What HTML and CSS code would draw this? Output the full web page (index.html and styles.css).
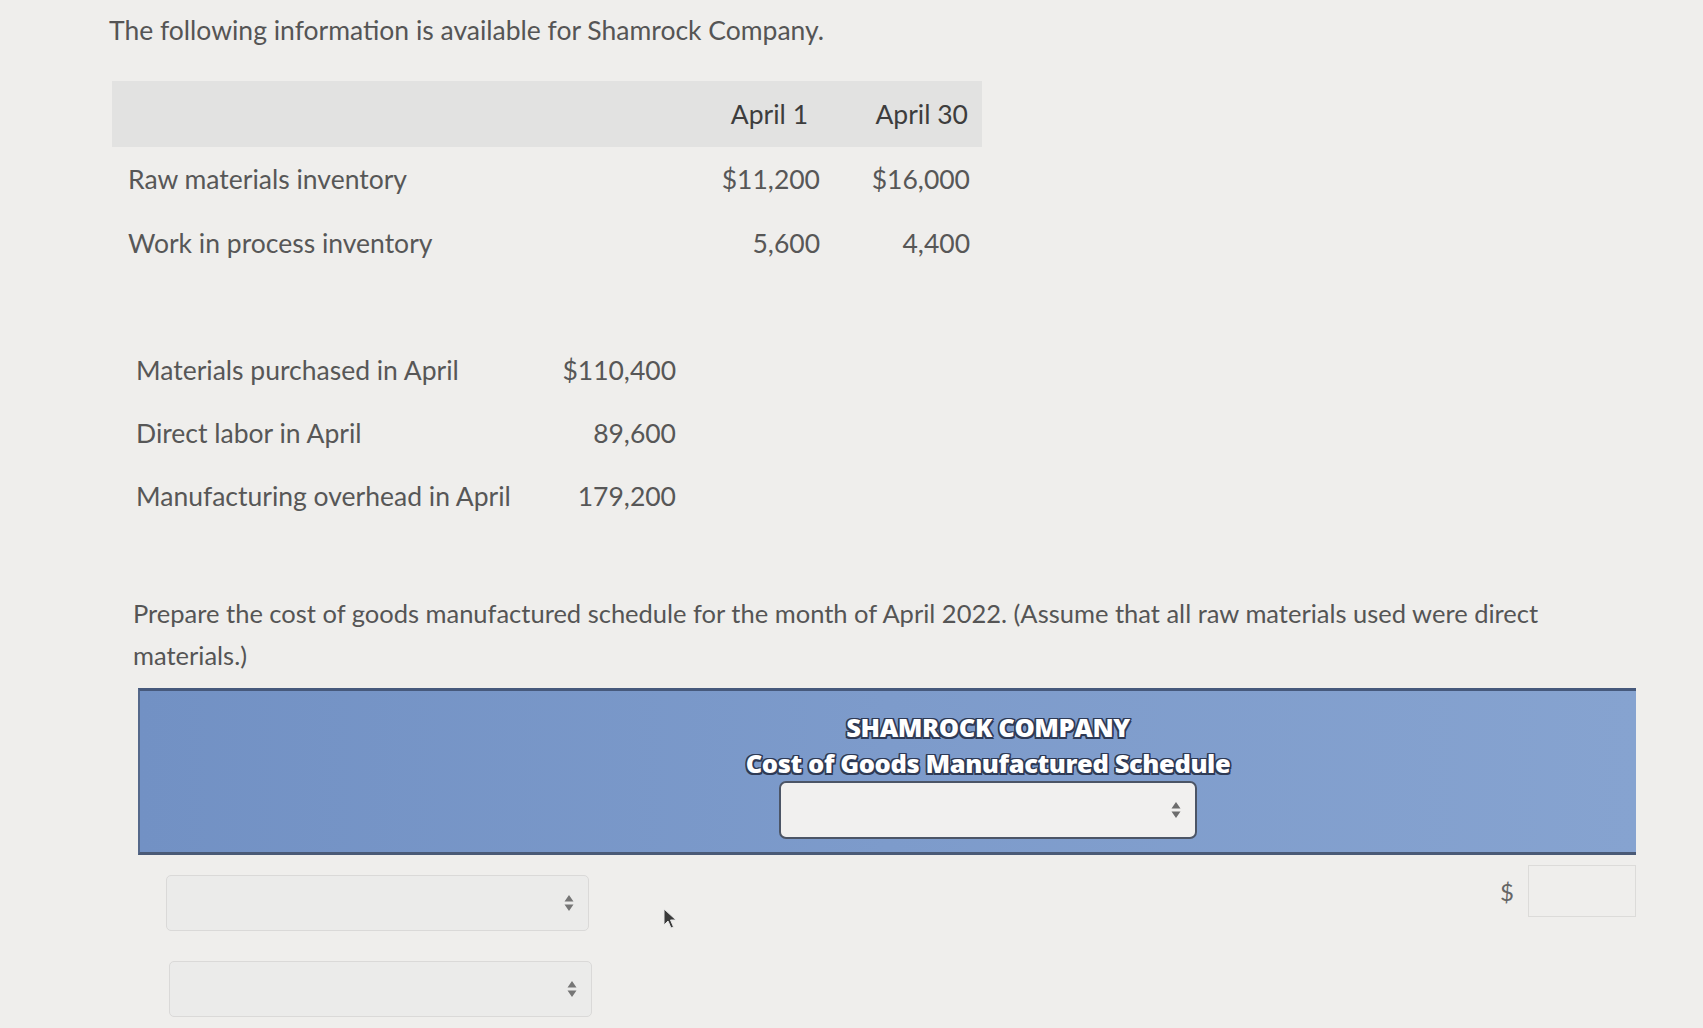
FILE: index.html
```html
<!DOCTYPE html>
<html lang="en">
<head>
<meta charset="utf-8">
<title>Shamrock Company</title>
<link rel="stylesheet" href="styles.css">
</head>
<body>
<div class="page">
  <p class="intro">The following information is available for Shamrock Company.</p>

  <div class="inv-table">
    <div class="inv-head">
      <div></div>
      <div class="num first">April 1</div>
      <div class="num">April 30</div>
    </div>
    <div class="inv-row">
      <div class="label">Raw materials inventory</div>
      <div class="num">$11,200</div>
      <div class="num">$16,000</div>
    </div>
    <div class="inv-row">
      <div class="label">Work in process inventory</div>
      <div class="num">5,600</div>
      <div class="num">4,400</div>
    </div>
  </div>

  <div class="cost-table">
    <div class="cost-row">
      <div class="label">Materials purchased in April</div>
      <div class="num">$110,400</div>
    </div>
    <div class="cost-row">
      <div class="label">Direct labor in April</div>
      <div class="num">89,600</div>
    </div>
    <div class="cost-row">
      <div class="label">Manufacturing overhead in April</div>
      <div class="num">179,200</div>
    </div>
  </div>

  <p class="prompt">Prepare the cost of goods manufactured schedule for the month of April 2022. (Assume that all raw materials used were direct materials.)</p>

  <div class="band">
    <div class="band-inner">
      <div class="band-title">SHAMROCK COMPANY</div>
      <div class="band-title">Cost of Goods Manufactured Schedule</div>
      <div class="select select-band">
        <svg class="arrows" width="10" height="18" viewBox="0 0 10 18"><path d="M5 1 L9.5 7.5 L0.5 7.5 Z M5 17 L9.5 10.5 L0.5 10.5 Z" fill="#6d6d6d"/></svg>
      </div>
    </div>
  </div>

  <div class="entry-row">
    <div class="select select-line">
      <svg class="arrows" width="10" height="18" viewBox="0 0 10 18"><path d="M5 1 L9.5 7.5 L0.5 7.5 Z M5 17 L9.5 10.5 L0.5 10.5 Z" fill="#767676"/></svg>
    </div>
    <div class="amount">
      <span class="dollar">$</span>
      <div class="input-box"></div>
    </div>
  </div>

  <div class="entry-row second">
    <div class="select select-line">
      <svg class="arrows" width="10" height="18" viewBox="0 0 10 18"><path d="M5 1 L9.5 7.5 L0.5 7.5 Z M5 17 L9.5 10.5 L0.5 10.5 Z" fill="#767676"/></svg>
    </div>
  </div>

  <svg class="cursor" width="14" height="22" viewBox="0 0 14 22"><path d="M1 1 L1 17 L5 13 L8 20 L10.5 19 L7.5 12 L13 12 Z" fill="#3a3a3a" stroke="#e8e8e8" stroke-width="1"/></svg>
</div>
</body>
</html>
```

FILE: styles.css
```css
html, body {
  margin: 0;
  padding: 0;
  background: #efeeec;
}

body {
  font-family: Lato, "Open Sans", "Liberation Sans", sans-serif;
  color: #575757;
  font-size: 26.5px;
}

.page {
  position: relative;
  padding-top: 15px;
  min-height: 1028px;
  box-sizing: border-box;
}

.intro {
  margin: 0 0 0 109px;
  line-height: 30px;
  color: #555;
}

.inv-table {
  margin: 36px 0 0 112px;
  width: 870px;
}

.inv-head,
.inv-row {
  display: grid;
  grid-template-columns: 588px 132px 150px;
  align-items: center;
}

.inv-head {
  height: 66px;
  background: #e2e2e1;
  color: #3d3d3d;
}

.inv-head .num {
  padding-right: 14px;
}

.inv-head .num.first {
  padding-right: 24px;
}

.inv-row {
  height: 64px;
}

.label {
  padding-left: 16px;
  white-space: nowrap;
}

.num {
  text-align: right;
  padding-right: 12px;
}

.cost-table {
  margin: 63px 0 0 120px;
  width: 570px;
}

.cost-row {
  display: grid;
  grid-template-columns: 430px 140px;
  align-items: center;
  height: 63px;
}

.cost-row .num {
  padding-right: 14px;
}

.prompt {
  margin: 65px 0 0 133px;
  width: 1500px;
  line-height: 42px;
  font-size: 25.5px;
  color: #555;
}

.band {
  margin: 12px 0 0 138px;
  width: 1498px;
  box-sizing: border-box;
  background: linear-gradient(90deg, #7291c4 0%, #7d9bcb 50%, #86a3d0 100%);
  border-top: 3px solid #46597c;
  border-bottom: 3px solid #4a5a76;
  border-left: 2px solid #55688a;
  padding: 18px 0 13px 200px;
}

.band-inner {
  display: flex;
  flex-direction: column;
  align-items: center;
}

.band-title {
  font-family: "Open Sans", Lato, sans-serif;
  font-weight: 800;
  font-size: 25.5px;
  line-height: 36px;
  letter-spacing: -0.4px;
  color: #ffffff;
  text-shadow:
    -1.5px -1.5px 0 #2e3a55,
     1.5px -1.5px 0 #2e3a55,
    -1.5px  1.5px 0 #2e3a55,
     1.5px  1.5px 0 #2e3a55,
     0 1.5px 0 #2e3a55,
     0 -1.5px 0 #2e3a55,
     1.5px 0 0 #2e3a55,
    -1.5px 0 0 #2e3a55;
}

.select {
  display: flex;
  align-items: center;
  justify-content: flex-end;
  box-sizing: border-box;
}

.select-band {
  width: 418px;
  height: 58px;
  background: #f1f0ef;
  border: 2px solid #4c5566;
  border-radius: 7px;
  padding-right: 14px;
}

.entry-row {
  display: flex;
  align-items: flex-start;
  justify-content: space-between;
  margin: 20px 0 0 166px;
  width: 1470px;
}

.entry-row.second {
  margin-top: 30px;
  margin-left: 169px;
}

.select-line {
  width: 423px;
  height: 56px;
  background: #ebebea;
  border: 1px solid #dad9d8;
  border-radius: 5px;
  padding-right: 14px;
}

.amount {
  display: flex;
  align-items: center;
  gap: 14px;
  margin-top: -10px;
}

.dollar {
  color: #666;
  font-size: 24px;
}

.input-box {
  width: 108px;
  height: 52px;
  box-sizing: border-box;
  border: 1px solid #dcdbd9;
  background: #efeeec;
}

.cursor {
  position: absolute;
  left: 663px;
  top: 908px;
}
```
